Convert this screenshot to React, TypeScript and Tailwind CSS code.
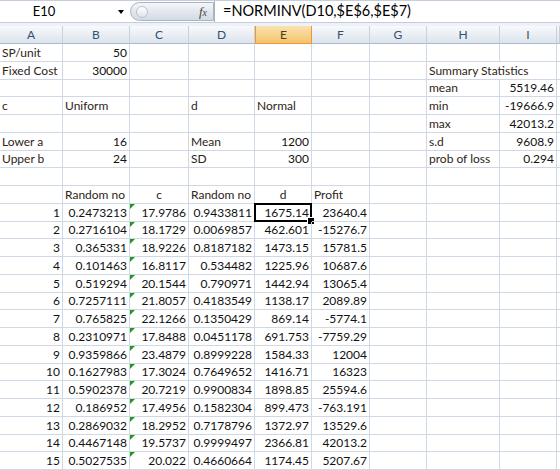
import React from "react";

type Cell = {
  t?: string;
  a?: "l" | "r" | "c";
  tri?: boolean;
  sel?: boolean;
  lbl?: boolean;
  noR?: boolean;
};

const COLS = "grid-cols-[63px_67px_59px_66px_57px_58px_57px_73px_57px_1fr]";
const HEADS = ["A", "B", "C", "D", "E", "F", "G", "H", "I", ""];

const L = (t: string): Cell => ({ t, a: "l", lbl: true });
const R = (t: string): Cell => ({ t, a: "r" });
const E: Cell = {};

const data: string[][] = [
  ["0.2473213", "17.9786", "0.9433811", "1675.14", "23640.4"],
  ["0.2716104", "18.1729", "0.0069857", "462.601", "-15276.7"],
  ["0.365331", "18.9226", "0.8187182", "1473.15", "15781.5"],
  ["0.101463", "16.8117", "0.534482", "1225.96", "10687.6"],
  ["0.519294", "20.1544", "0.790971", "1442.94", "13065.4"],
  ["0.7257111", "21.8057", "0.4183549", "1138.17", "2089.89"],
  ["0.765825", "22.1266", "0.1350429", "869.14", "-5774.1"],
  ["0.2310971", "17.8488", "0.0451178", "691.753", "-7759.29"],
  ["0.9359866", "23.4879", "0.8999228", "1584.33", "12004"],
  ["0.1627983", "17.3024", "0.7649652", "1416.71", "16323"],
  ["0.5902378", "20.7219", "0.9900834", "1898.85", "25594.6"],
  ["0.186952", "17.4956", "0.1582304", "899.473", "-763.191"],
  ["0.2869032", "18.2952", "0.7178796", "1372.97", "13529.6"],
  ["0.4467148", "19.5737", "0.9999497", "2366.81", "42013.2"],
  ["0.5027535", "20.022", "0.4660664", "1174.45", "5207.67"],
];

const top: Cell[][] = [
  [L("SP/unit"), R("50"), E, E, E, E, E, E, E, E],
  [L("Fixed Cost"), R("30000"), E, E, E, E, E, { ...L("Summary Statistics"), noR: true }, E, E],
  [E, E, E, E, E, E, E, L("mean"), R("5519.46"), E],
  [L("c"), L("Uniform"), E, L("d"), L("Normal"), E, E, L("min"), R("-19666.9"), E],
  [E, E, E, E, E, E, E, L("max"), R("42013.2"), E],
  [L("Lower a"), R("16"), E, L("Mean"), R("1200"), E, E, L("s.d"), R("9608.9"), E],
  [L("Upper b"), R("24"), E, L("SD"), R("300"), E, E, L("prob of loss"), R("0.294"), E],
  [E, E, E, E, E, E, E, E, E, E],
  [
    E,
    L("Random no"),
    { t: "c", a: "c", lbl: true },
    L("Random no"),
    { t: "d", a: "c", lbl: true },
    L("Profit"),
    E,
    E,
    E,
    E,
  ],
];

const rows: Cell[][] = [
  ...top,
  ...data.map((r, i) => [
    R(String(i + 1)),
    R(r[0]),
    { ...R(r[1]), tri: true },
    R(r[2]),
    { ...R(r[3]), sel: i === 0 },
    R(r[4]),
    E,
    E,
    E,
    E,
  ]),
];

function GridCell({ c }: { c: Cell }) {
  const align =
    c.a === "r" ? "justify-end" : c.a === "c" ? "justify-center" : "justify-start";
  return (
    <div
      className={`relative flex items-end pb-[2px] px-[2px] whitespace-nowrap border-b border-[#d0d7e5] ${
        c.noR ? "z-10" : "border-r"
      } ${align} ${c.lbl ? "text-[#2e2418]" : "text-[#111]"}`}
    >
      {c.tri && (
        <span className="absolute left-0 top-0 h-0 w-0 border-t-[5px] border-r-[5px] border-t-[#1e9a1e] border-r-transparent" />
      )}
      {c.t}
      {c.sel && (
        <span className="absolute -left-px -top-px -right-px -bottom-px border-[2.5px] border-black">
          <span className="absolute -right-[4px] -bottom-[4px] h-[6px] w-[6px] bg-black outline outline-1 outline-white" />
        </span>
      )}
    </div>
  );
}

export default function App() {
  return (
    <div className="h-[470px] w-[560px] overflow-hidden bg-white font-['Lato',sans-serif] text-[12px] leading-none">
      {/* Formula bar */}
      <div className="flex h-[23px] items-stretch border-t border-b border-[#c3cddb] bg-white">
        <div className="flex w-[130px] items-center">
          <div className="w-[88px] text-center text-[13px] text-black">E10</div>
          <div className="ml-[30px] h-0 w-0 border-t-[4px] border-x-[3.5px] border-t-black border-x-transparent" />
        </div>
        <div className="my-[1px] flex w-[84px] items-center rounded-l-full border border-[#a7b4c4] bg-linear-to-b from-[#f4f6f9] to-[#d3dae3] pl-[5px] pr-[6px]">
          <div className="h-[12px] w-[12px] rounded-full border border-[#b9c2cd] bg-linear-to-b from-white to-[#dfe4ea]" />
          <span className="ml-auto font-['Liberation_Serif',serif] text-[13px] italic text-[#444]">
            f<span className="text-[10px]">x</span>
          </span>
        </div>
        <div className="flex flex-1 items-center border-l border-[#a7b4c4] pl-[8px] text-[14.5px] text-black">
          =NORMINV(D10,$E$6,$E$7)
        </div>
      </div>
      <div className="h-[3px] bg-[#eef1f5]" />

      {/* Column headers */}
      <div className={`grid ${COLS} h-[18px]`}>
        {HEADS.map((h, i) =>
          i === 4 ? (
            <div
              key={i}
              className="flex items-center justify-center border-x border-b border-[#f29536] bg-linear-to-b from-[#fbe2b0] to-[#f3c468] text-[#4a3a20]"
            >
              {h}
            </div>
          ) : (
            <div
              key={i}
              className="flex items-center justify-center border-r border-b border-r-[#c6d1de] border-b-[#a8bbd0] bg-linear-to-b from-[#f8fafc] to-[#dce3ec] text-[#34506e]"
            >
              {h}
            </div>
          )
        )}
      </div>

      {/* Cells */}
      <div className={`grid ${COLS} auto-rows-[17.75px]`}>
        {rows.map((r, ri) =>
          r.map((c, ci) => <GridCell key={`${ri}-${ci}`} c={c} />)
        )}
      </div>
    </div>
  );
}
